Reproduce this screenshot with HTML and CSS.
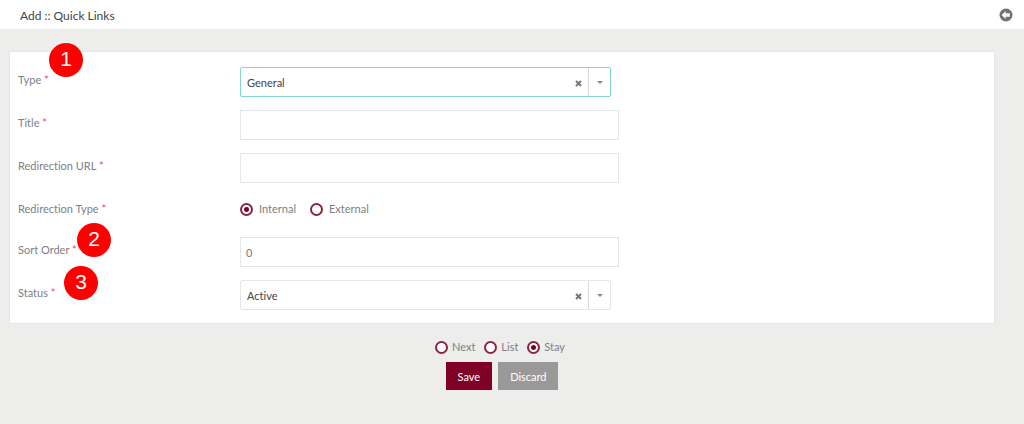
FILE: index.html
```html
<!DOCTYPE html>
<html lang="en">

<head>
	<meta charset="UTF-8">
	<meta name="viewport" content="width=device-width, initial-scale=1">
	<title>Add :: Quick Links</title>
	<link rel="stylesheet" href="styles.css">
</head>

<body>
	<header class="page-head">
		<h1>Add :: Quick Links</h1>
		<a class="back" href="#" aria-label="Back">
			<svg viewBox="0 0 14 14" width="14" height="14">
				<circle cx="7" cy="7" r="6.5" fill="#6d7378" />
				<path d="M2.6 7L6.6 3V5.2H10.8V8.8H6.6V11Z" fill="#fff" />
			</svg>
		</a>
	</header>

	<form class="link-form">
		<div class="panel">
			<div class="row">
				<div class="name">
					<label for="type">Type <i>*</i></label>
					<span class="mark mark-type">1</span>
				</div>
				<div class="picker active">
					<select id="type">
						<option>General</option>
					</select>
					<button class="clear" type="button" aria-label="Clear type">
						<svg viewBox="0 0 7 7" width="7" height="7"><path d="M1 1L6 6M6 1L1 6" stroke="#777" stroke-width="2" /></svg>
					</button>
					<span class="arrow"></span>
				</div>
			</div>
			<div class="row">
				<div class="name"><label for="title">Title <i>*</i></label></div>
				<input class="text" id="title" type="text">
			</div>
			<div class="row">
				<div class="name"><label for="url">Redirection URL <i>*</i></label></div>
				<input class="text" id="url" type="text">
			</div>
			<div class="row row-radio" role="radiogroup" aria-labelledby="redirect">
				<div class="name"><span id="redirect">Redirection Type <i>*</i></span></div>
				<div class="radios">
					<label><input type="radio" name="redirect" checked>Internal</label>
					<label><input type="radio" name="redirect">External</label>
				</div>
			</div>
			<div class="row">
				<div class="name">
					<label for="sort">Sort Order <i>*</i></label>
					<span class="mark mark-sort">2</span>
				</div>
				<input class="text" id="sort" type="text" value="0">
			</div>
			<div class="row">
				<div class="name">
					<label for="status">Status <i>*</i></label>
					<span class="mark mark-status">3</span>
				</div>
				<div class="picker">
					<select id="status">
						<option>Active</option>
					</select>
					<button class="clear" type="button" aria-label="Clear status">
						<svg viewBox="0 0 7 7" width="7" height="7"><path d="M1 1L6 6M6 1L1 6" stroke="#777" stroke-width="2" /></svg>
					</button>
					<span class="arrow"></span>
				</div>
			</div>
		</div>

		<div class="after">
			<label><input type="radio" name="after">Next</label>
			<label><input type="radio" name="after">List</label>
			<label><input type="radio" name="after" checked>Stay</label>
		</div>
		<div class="actions">
			<button class="btn save" type="submit">Save</button>
			<button class="btn discard" type="button">Discard</button>
		</div>
	</form>
</body>

</html>
```
FILE: styles.css
```css
* {
	box-sizing: border-box;
}

body {
	margin: 0;
	background: #ededeb;
	color: #7c8084;
	font-family: Lato, "Open Sans", sans-serif;
	font-size: 11px;
	font-variant-ligatures: none;
}

input,
select,
button {
	margin: 0;
	font: inherit;
}

.page-head {
	display: flex;
	align-items: center;
	justify-content: space-between;
	height: 29px;
	padding: 1px 11px 0 20px;
	background: #fff;
}

.page-head h1 {
	margin: 0;
	color: #444;
	font-size: 12px;
	font-weight: normal;
}

.back {
	display: flex;
}

.link-form {
	padding: 22px 29px 34px 9px;
}

.panel {
	display: flex;
	flex-direction: column;
	gap: 13px;
	padding: 15px 8px 13px;
	border: 1px solid #e6e7ed;
	background: #fff;
}

.row {
	display: grid;
	grid-template-columns: 222px minmax(0, 379px);
	align-items: start;
	min-height: 30px;
}

.row-radio {
	min-height: 28px;
}

.name {
	position: relative;
	line-height: 26px;
}

.name i {
	color: #e0525c;
	font-style: normal;
}

/* numbered markers over the labels */
.mark {
	position: absolute;
	width: 34px;
	height: 34px;
	border-radius: 50%;
	background: #f00;
	color: #fff;
	font: 21px/32px "Liberation Sans", Arial, sans-serif;
	text-align: center;
}

.mark-type {
	top: -24px;
	left: 31px;
}

.mark-sort {
	top: -14px;
	left: 59px;
}

.mark-status {
	top: -14px;
	left: 46px;
}

.text {
	width: 100%;
	height: 30px;
	padding: 0 5px;
	border: 1px solid #e5e6e7;
	background: #fff;
	color: #777;
}

.picker {
	position: relative;
	height: 30px;
	margin-right: 8px;
	border: 1px solid #e5e6e7;
	border-radius: 2px;
}

.picker.active {
	border-color: #84d8ca;
}

.picker select {
	width: 100%;
	height: 28px;
	padding: 0 48px 0 6px;
	border: 0;
	background: none;
	color: #444;
	appearance: none;
}

.clear {
	position: absolute;
	top: 1px;
	right: 22px;
	display: flex;
	align-items: center;
	justify-content: center;
	width: 20px;
	height: 28px;
	padding: 0;
	border: 0;
	background: none;
}

.arrow {
	position: absolute;
	top: 0;
	right: 0;
	display: flex;
	align-items: center;
	justify-content: center;
	width: 22px;
	height: 28px;
	border-left: 1px solid #d5dae0;
	pointer-events: none;
}

.arrow::after {
	content: "";
	border: 3px solid transparent;
	border-top-color: #888;
	border-bottom: 0;
}

.radios,
.after {
	display: flex;
	line-height: 26px;
}

.radios {
	gap: 14px;
}

.radios label,
.after label {
	display: flex;
	align-items: center;
}

.radios label {
	gap: 6px;
}

input[type="radio"] {
	width: 13px;
	height: 13px;
	border: 2px solid #8a2445;
	border-radius: 50%;
	background: #fff;
	appearance: none;
}

input[type="radio"]:checked {
	background: radial-gradient(circle, #800026 2px, #fff 3px);
}

.after {
	justify-content: center;
	gap: 9px;
	margin-top: 10px;
	padding-right: 4px;
}

.after label {
	gap: 4px;
}

.actions {
	display: flex;
	justify-content: center;
	gap: 6px;
	margin-top: 2px;
}

.btn {
	height: 28px;
	padding: 0 12px;
	border: 0;
	color: #fff;
}

.save {
	background: #800026;
}

.discard {
	background: #999;
}
```
